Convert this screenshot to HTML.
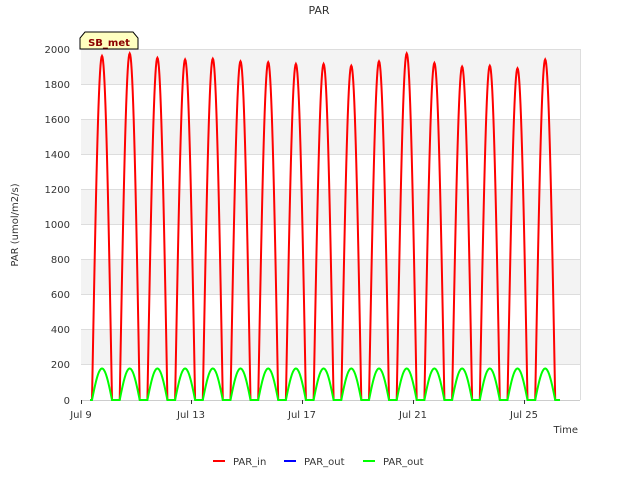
<!DOCTYPE html>
<html><head><meta charset="utf-8"><style>
body{margin:0;background:#fff;font-family:"DejaVu Sans",sans-serif;}
svg text{font-family:"DejaVu Sans",sans-serif;}
</style></head><body>
<svg id="s" width="640" height="480" xmlns="http://www.w3.org/2000/svg">
<rect x="81" y="49" width="499" height="351" fill="#fff"/>
<g fill="#f3f3f3">
<rect x="81" y="49" width="499" height="35"/>
<rect x="81" y="119" width="499" height="35"/>
<rect x="81" y="189" width="499" height="35"/>
<rect x="81" y="259" width="499" height="35"/>
<rect x="81" y="330" width="499" height="35"/>
</g>
<g stroke="#ddd" stroke-width="1">
<line x1="81" x2="580" y1="49.5" y2="49.5"/><line x1="81" x2="580" y1="84.5" y2="84.5"/>
<line x1="81" x2="580" y1="119.5" y2="119.5"/><line x1="81" x2="580" y1="154.5" y2="154.5"/>
<line x1="81" x2="580" y1="189.5" y2="189.5"/><line x1="81" x2="580" y1="224.5" y2="224.5"/>
<line x1="81" x2="580" y1="259.5" y2="259.5"/><line x1="81" x2="580" y1="294.5" y2="294.5"/>
<line x1="81" x2="580" y1="329.5" y2="329.5"/><line x1="81" x2="580" y1="364.5" y2="364.5"/>
<line x1="580.5" x2="580.5" y1="49" y2="400"/>
</g>
<line x1="81" x2="580" y1="400.5" y2="400.5" stroke="#ccc"/>
<g font-size="10" fill="#333" text-anchor="end">
<text x="70" y="53">2000</text><text x="70" y="88">1800</text><text x="70" y="123">1600</text>
<text x="70" y="158">1400</text><text x="70" y="193">1200</text><text x="70" y="228">1000</text>
<text x="70" y="263">800</text><text x="70" y="298">600</text><text x="70" y="333">400</text>
<text x="70" y="368">200</text><text x="70" y="404">0</text>
</g>
<g font-size="10" fill="#333" text-anchor="middle">
<text x="81" y="418">Jul 9</text><text x="191" y="418">Jul 13</text><text x="302" y="418">Jul 17</text>
<text x="413" y="418">Jul 21</text><text x="524" y="418">Jul 25</text>
</g>
<g stroke="#333"><line x1="81.5" x2="81.5" y1="400" y2="404"/><line x1="191.5" x2="191.5" y1="400" y2="404"/><line x1="302.5" x2="302.5" y1="400" y2="404"/><line x1="413.5" x2="413.5" y1="400" y2="404"/><line x1="524.5" x2="524.5" y1="400" y2="404"/></g>
<text x="319" y="14" font-size="11" fill="#333" text-anchor="middle">PAR</text>
<text x="578" y="433" font-size="10" fill="#333" text-anchor="end">Time</text>
<text transform="translate(18,225) rotate(-90)" font-size="10" fill="#333" text-anchor="middle">PAR (umol/m2/s)</text>
<path id="red" fill="none" stroke="#f00" stroke-width="2"/>
<path id="grn" fill="none" stroke="#0f0" stroke-width="2"/>
<path d="M80,49 L80,38 L85,32 L133,32 L138,38 L138,49 Z" fill="#ffffc0" stroke="#000" stroke-width="1"/>
<text x="109" y="46" font-size="10" font-weight="bold" fill="#8b0000" text-anchor="middle">SB_met</text>
<line x1="213" x2="225" y1="461" y2="461" stroke="#f00" stroke-width="2"/>
<text x="233" y="465" font-size="10" fill="#333">PAR_in</text>
<line x1="284" x2="296" y1="461" y2="461" stroke="#00f" stroke-width="2"/>
<text x="304" y="465" font-size="10" fill="#333">PAR_out</text>
<line x1="363" x2="375" y1="461" y2="461" stroke="#0f0" stroke-width="2"/>
<text x="383" y="465" font-size="10" fill="#333">PAR_out</text>
</svg>
<script>
var v=[1960,1975,1950,1940,1945,1930,1925,1915,1915,1905,1930,1975,1920,1900,1905,1890,1940];
var r="",g="M90,400";
for(var i=0;i<v.length;i++){
 var c=102+27.7*i;
 var s="";
 for(var k=0;k<=40;k++){
  var t=k/40, x=c-10+20*t, y=400-v[i]*0.1755*Math.sin(Math.PI*t);
  s+=(k==0?"M":"L")+x.toFixed(1)+","+y.toFixed(1);
 }
 r+=s;
 for(var k=0;k<=20;k++){
  var t=k/20, x=c-10+20*t, y=400-180*0.1755*Math.sin(Math.PI*t);
  g+="L"+x.toFixed(1)+","+y.toFixed(1);
 }
}
g+="L560,400";
document.getElementById("red").setAttribute("d",r);
document.getElementById("grn").setAttribute("d",g);
</script>
</body></html>
